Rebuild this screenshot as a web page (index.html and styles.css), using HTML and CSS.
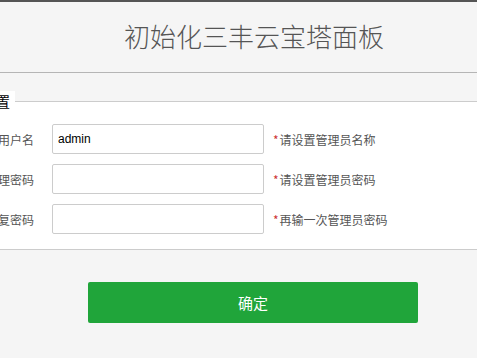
FILE: index.html
```
<!DOCTYPE html>
<html lang="zh-CN">
<head>
<meta charset="utf-8">
<title>初始化三丰云宝塔面板</title>
<link rel="stylesheet" href="styles.css">
</head>
<body>
<div class="page">
  <header class="header">
    <h1 class="title">初始化三丰云宝塔面板</h1>
  </header>
  <form class="form">
    <fieldset class="group">
      <legend class="legend">设置</legend>
      <div class="row">
        <label class="label">用户名</label>
        <input class="field" type="text" value="admin">
        <span class="hint"><span class="star">*</span>请设置管理员名称</span>
      </div>
      <div class="row">
        <label class="label">管理密码</label>
        <input class="field" type="password">
        <span class="hint"><span class="star">*</span>请设置管理员密码</span>
      </div>
      <div class="row">
        <label class="label">重复密码</label>
        <input class="field" type="password">
        <span class="hint"><span class="star">*</span>再输一次管理员密码</span>
      </div>
    </fieldset>
    <div class="actions">
      <button class="submit" type="button">确定</button>
    </div>
  </form>
</div>
</body>
</html>
```
FILE: styles.css
```
html, body {
  margin: 0;
  padding: 0;
  overflow: hidden;
  background: #f5f5f5;
  font-family: "Noto Sans CJK SC", "Liberation Sans", sans-serif;
}
body {
  border-top: 2px solid #555;
}
.page {
  width: 600px;
  margin-left: -46px;
}
.header {
  height: 70px;
  border-bottom: 1px solid #b5b5b5;
  background: #f5f5f5;
  margin-right: -200px;
  margin-left: -200px;
  padding: 0 200px;
}
.title {
  margin: 0;
  height: 70px;
  line-height: 68px;
  text-align: center;
  font-size: 26px;
  font-weight: 300;
  color: #555;
}
.form {
  margin-top: 18px;
}
.group {
  margin: 0 -200px 0 0;
  padding: 0 0 15px 0;
  border: 1px solid #ccc;
  border-left: none;
  background: #fff;
}
.legend {
  margin-left: 23px;
  padding: 0 5px;
  font-size: 14px;
  line-height: 20px;
  color: #000;
  background: #fff;
}
.row {
  display: flex;
  align-items: center;
  height: 30px;
  margin-top: 10px;
}
.row:first-of-type {
  margin-top: 13px;
}
.label {
  width: 80px;
  margin-right: 18px;
  text-align: right;
  font-size: 12px;
  color: #555;
}
.field {
  box-sizing: border-box;
  width: 212px;
  height: 30px;
  margin: 0;
  padding: 0 5px;
  border: 1px solid #ccc;
  border-radius: 2px;
  background: #fff;
  font-family: "Liberation Sans", Arial, sans-serif;
  font-size: 12px;
  color: #000;
  outline: none;
}
.hint {
  margin-left: 9px;
  font-size: 12px;
  color: #555;
}
.star {
  color: #c33;
  margin-right: 1px;
}
.actions {
  display: flex;
  justify-content: center;
  padding-top: 32px;
  padding-right: 2px;
}
.submit {
  width: 330px;
  height: 41px;
  border: none;
  border-radius: 2px;
  background: #20a53a;
  color: #fff;
  font-family: "Noto Sans CJK SC", sans-serif;
  font-size: 15px;
  cursor: pointer;
}
```
